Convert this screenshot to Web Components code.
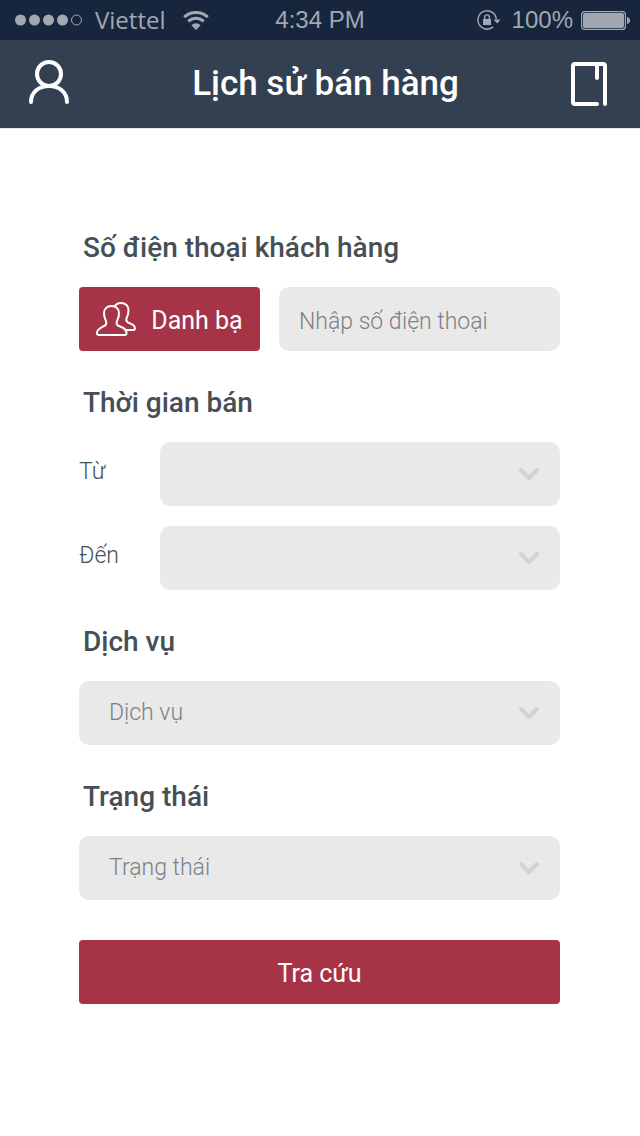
<!DOCTYPE html>
<html lang="vi">
<head>
<meta charset="utf-8">
<meta name="viewport" content="width=device-width, initial-scale=1">
<title>Lịch sử bán hàng</title>
<style>
  body { margin: 0; background: #fff; color: #455056; font-family: Roboto, "Noto Sans", sans-serif; }
</style>
</head>
<body>
<status-bar carrier="Viettel" time="4:34 PM" battery="100%"></status-bar>
<nav-bar>Lịch sử bán hàng</nav-bar>
<sales-form>
  <phone-field placeholder="Nhập số điện thoại">Số điện thoại khách hàng</phone-field>
  <period-field>Thời gian bán</period-field>
  <choice-field placeholder="Dịch vụ">Dịch vụ</choice-field>
  <choice-field placeholder="Trạng thái">Trạng thái</choice-field>
  <action-button>Tra cứu</action-button>
</sales-form>

<script>
const define = (name, render) => customElements.define(name, class extends HTMLElement {
  constructor() { super(); this.attachShadow({ mode: 'open' }); }
  connectedCallback() { this.shadowRoot.innerHTML = render(this); }
});
const attr = (el, name) => el.getAttribute(name) || '';

// Section headings share one look in every kind of field.
const headingCss = `
  .heading { display: block; margin: 0; padding: 0 4px 18px; font-size: 28px; font-weight: 500; line-height: 42px; }`;

define('status-bar', el => `
  <style>
    :host { display: grid; grid-template-columns: 1fr auto 1fr; align-items: center; height: 40px; padding: 0 10px;
      background: #17263d; color: #a2a8b1; font: 24px/40px "Liberation Sans", Arial, sans-serif; }
    svg { display: block; flex: none; }
    .side { display: flex; align-items: center; }
    .left { padding-left: 5px; }
    .right { justify-content: flex-end; }
    .carrier { font: 400 24px/40px "Open Sans", sans-serif; margin: 0 17px 0 12px; }
    .lock { margin-right: 11px; }
    .battery { margin-left: 8px; }
  </style>
  <div class="side left">
    <svg width="68" height="12" viewBox="0 0 68 12" fill="currentColor" aria-hidden="true">
      <circle cx="5.5" cy="6" r="5.5"/><circle cx="19.5" cy="6" r="5.5"/><circle cx="33.5" cy="6" r="5.5"/><circle cx="47.5" cy="6" r="5.5"/>
      <circle cx="61.5" cy="6" r="5" fill="none" stroke="currentColor"/>
    </svg>
    <span class="carrier">${attr(el, 'carrier')}</span>
    <svg width="26" height="19" viewBox="0 0 26 19" fill="none" stroke="currentColor" stroke-width="3" aria-hidden="true">
      <path d="M1.2 6.2A17 17 0 0 1 24.8 6.2M5.3 10.4A11 11 0 0 1 20.7 10.4"/>
      <path d="M8.4 14.2a6.5 6.5 0 0 1 9.2 0L13 19z" fill="currentColor" stroke="none"/>
    </svg>
  </div>
  <span>${attr(el, 'time')}</span>
  <div class="side right">
    <svg class="lock" width="24" height="20" viewBox="0 0 24 20" fill="none" stroke="currentColor" stroke-width="1.4" aria-hidden="true">
      <path d="M19.3 9.3A9.2 9.2 0 1 0 16.2 16.9"/>
      <path d="M16.6 9.5h7l-3.500 4z" fill="currentColor" stroke="none"/>
      <path d="M6 9h8v6H6z" fill="currentColor" stroke="none"/>
      <path d="M7.7 9.5V7.200a2.3 2.3 0 0 1 4.6 0v2.3"/>
    </svg>
    <span>${attr(el, 'battery')}</span>
    <svg class="battery" width="49" height="19" viewBox="0 0 49 19" aria-hidden="true">
      <rect x=".6" y=".6" width="43.8" height="17.8" rx="3" fill="none" stroke="currentColor" stroke-width="1.2"/>
      <rect x="2" y="2" width="41" height="15" rx="2" fill="currentColor"/>
      <path d="M46 6q3 .6 3 3.500T46 13z" fill="currentColor"/>
    </svg>
  </div>`);

define('nav-bar', () => `
  <style>
    :host { display: flex; align-items: center; height: 88px; padding: 0 33px 0 28px; background: #324052; color: #fff; border-bottom: 1px solid #e6e6e6; }
    h1 { flex: 1; margin: 0; text-align: center; font-size: 35px; font-weight: 500; line-height: 48px; }
    button { display: flex; padding: 0; border: 0; background: none; color: inherit; cursor: pointer; }
    .account { width: 52px; }
    svg { fill: none; stroke: currentColor; stroke-width: 4; stroke-linecap: round; stroke-linejoin: round; }
  </style>
  <button class="account" type="button" aria-label="Tài khoản">
    <svg width="42" height="48" viewBox="0 0 42 48"><circle cx="21" cy="14" r="12"/><path d="M3 42C3 32 11 26 21 26S39 32 39 42"/></svg>
  </button>
  <h1><slot></slot></h1>
  <button type="button" aria-label="Danh mục">
    <svg width="36" height="44" viewBox="0 0 36 44"><path d="M26 42H4q-2 0-2-2V4q0-2 2-2H32q2 0 2 2V42M26 3V16"/></svg>
  </button>`);

define('action-button', () => `
  <style>
    :host { display: block; }
    button { display: flex; align-items: center; justify-content: center; gap: 15px; width: 100%; height: 64px; padding: 4px 0 0;
      border: 0; border-radius: 4px; background: #a63446; color: #fff; font: 400 25px/32px Roboto, sans-serif; cursor: pointer; }
    ::slotted(svg) { margin-bottom: 4px; }
  </style>
  <button type="button"><slot name="icon"></slot><slot></slot></button>`);

define('select-box', el => `
  <style>
    :host { display: grid; align-items: center; }
    select, svg { grid-area: 1 / 1; }
    select { appearance: none; width: 100%; height: 64px; margin: 0; padding: 0 60px 0 30px; border: 0; border-radius: 10px;
      background: #e9e9e9; color: #7b8185; font: 300 23px/32px Roboto, sans-serif; }
    svg { justify-self: end; margin-right: 20px; pointer-events: none; }
  </style>
  <select aria-label="${attr(el, 'label')}"><option value="">${attr(el, 'placeholder')}</option></select>
  <svg width="22" height="14" viewBox="0 0 22 14" fill="none" stroke="#d2d2d2" stroke-width="4" stroke-linecap="round" stroke-linejoin="round" aria-hidden="true"><path d="M3 3l8 8 8-8"/></svg>`);

define('phone-field', el => `
  <style>
    :host { display: block; }
    ${headingCss}
    .row { display: flex; gap: 19px; }
    action-button { flex: none; width: 181px; }
    input { flex: 1; min-width: 0; box-sizing: border-box; height: 64px; padding: 4px 20px 0; border: 0; border-radius: 10px;
      background: #e9e9e9; color: #455056; font: 300 23px/32px Roboto, sans-serif; }
    input::placeholder { color: #7b8185; opacity: 1; }
  </style>
  <label class="heading" for="phone"><slot></slot></label>
  <div class="row">
    <action-button>
      <svg slot="icon" width="40" height="34" viewBox="0 0 40 34" fill="none" stroke="currentColor" stroke-width="2" stroke-linejoin="round" aria-hidden="true">
        <path d="M15.5 4C20 4 23 7 23 11.500C23 15 22 16.500 21 19C20 22 21 23.500 24 24.500C28 26 30 27 30.500 30.500C30.700 32 30 33 28.500 33H3C1.500 33 .8 32 1 30.500C1.500 27 4 26 7 24.500C10 23.500 11 22 10 19C9 16.500 8 15 8 11.500C8 7 11 4 15.500 4Z"/>
        <path d="M18.500 4.500C20 2 22.500 1 25 1C29.500 1 32.500 4 32.500 8.500C32.500 12 31.500 14 30.500 16.500C29.800 19 30.500 20 33 21C36.500 22.500 38.500 23 39 26C39.200 27 38.500 28 37.500 28H30"/>
      </svg>Danh bạ</action-button>
    <input id="phone" type="tel" placeholder="${attr(el, 'placeholder')}">
  </div>`);

define('period-field', () => `
  <style>
    :host { display: block; }
    ${headingCss}
    .rows { display: grid; grid-template-columns: 81px 1fr; row-gap: 20px; align-items: center; }
    .name { padding-bottom: 4px; font-size: 23px; font-weight: 300; line-height: 32px; }
  </style>
  <h2 class="heading"><slot></slot></h2>
  <div class="rows">
    <span class="name">Từ</span><select-box label="Từ"></select-box>
    <span class="name">Đến</span><select-box label="Đến"></select-box>
  </div>`);

define('choice-field', el => `
  <style>
    :host { display: block; }
    ${headingCss}
  </style>
  <h2 class="heading"><slot></slot></h2>
  <select-box label="${attr(el, 'placeholder')}" placeholder="${attr(el, 'placeholder')}"></select-box>`);

define('sales-form', () => `
  <style>
    :host { display: block; padding: 98px 80px 40px 79px; }
    form { display: flex; flex-direction: column; gap: 31px; }
    ::slotted(action-button) { margin-top: 9px; }
  </style>
  <form><slot></slot></form>`);
</script>
</body>
</html>
